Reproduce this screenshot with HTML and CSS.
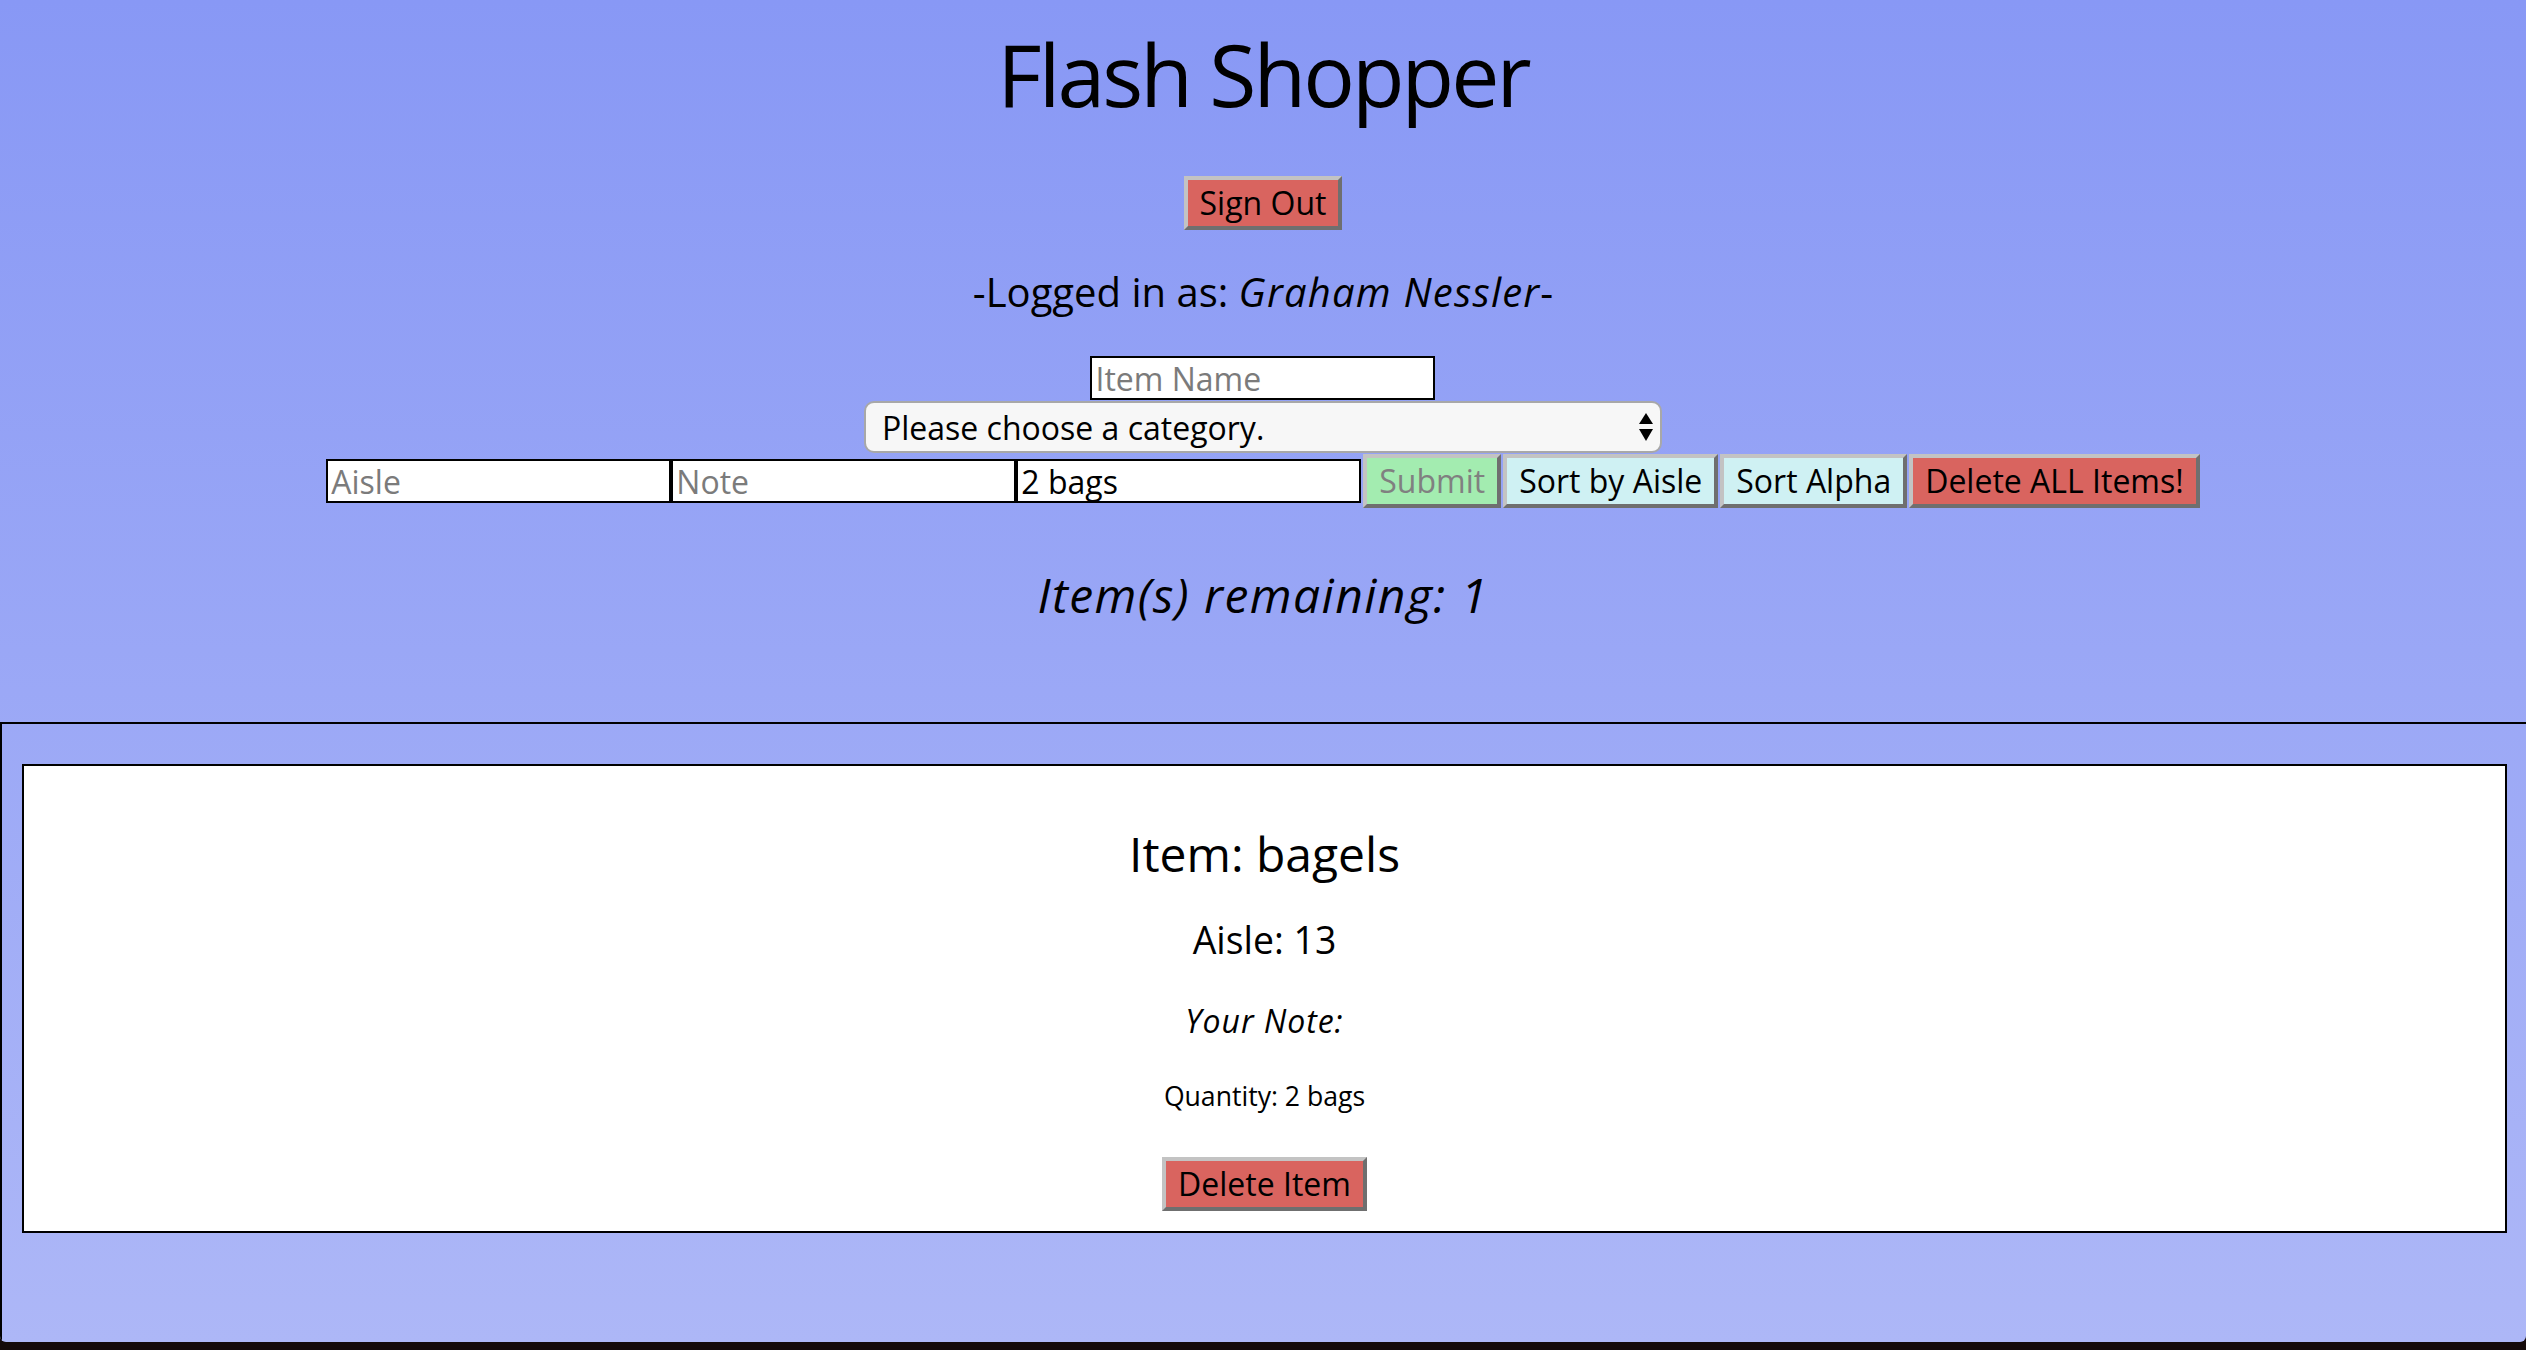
FILE: index.html
```html
<!DOCTYPE html>
<html lang="en">
<head>
<meta charset="utf-8">
<title>Flash Shopper</title>
<link rel="stylesheet" href="styles.css">
</head>
<body>
<div class="window">
  <main class="app">
    <h1 class="title">Flash Shopper</h1>
    <button class="btn btn-red signout" type="button">Sign Out</button>
    <p class="user">-Logged in as: <em class="user-name">Graham Nessler</em>-</p>
    <form class="entry">
      <input class="field" type="text" placeholder="Item Name">
      <div class="select-wrap">
        <select class="category">
          <option>Please choose a category.</option>
        </select>
        <svg class="arrows" width="14" height="28" viewBox="0 0 14 28" aria-hidden="true">
          <polygon points="7,0 14,11 0,11" fill="#000"/>
          <polygon points="0,16 14,16 7,28" fill="#000"/>
        </svg>
      </div>
      <div class="row">
        <input class="field" type="text" placeholder="Aisle">
        <input class="field" type="text" placeholder="Note">
        <input class="field" type="text" value="2 bags">
        <button class="btn btn-green" type="button" disabled>Submit</button>
        <button class="btn btn-cyan" type="button">Sort by Aisle</button>
        <button class="btn btn-cyan" type="button">Sort Alpha</button>
        <button class="btn btn-red" type="button">Delete ALL Items!</button>
      </div>
    </form>
    <h2 class="remaining">Item(s) remaining: 1</h2>
    <section class="list">
      <div class="card">
        <h2 class="item-name">Item: bagels</h2>
        <h3 class="item-aisle">Aisle: 13</h3>
        <h4 class="item-note">Your Note:</h4>
        <h5 class="item-qty">Quantity: 2 bags</h5>
        <button class="btn btn-red delete-item" type="button">Delete Item</button>
      </div>
    </section>
  </main>
</div>
</body>
</html>
```

FILE: styles.css
```css
html {
  background: #140a0a;
}

body {
  margin: 0;
  font-family: "Open Sans", "Noto Sans", sans-serif;
  color: #000;
}

.window {
  height: 1342px;
  overflow: hidden;
  background: linear-gradient(to bottom, #8898f5 0%, #adb7f7 100%);
  border-bottom-left-radius: 6px;
  border-bottom-right-radius: 6px;
}

.app {
  display: flex;
  flex-direction: column;
  align-items: center;
}

.title {
  margin: 15px 0 0;
  font-size: 86px;
  font-weight: normal;
  letter-spacing: -3px;
  line-height: normal;
}

.btn {
  font-family: "Open Sans", "Noto Sans", sans-serif;
  font-size: 32px;
  line-height: normal;
  height: 54px;
  box-sizing: border-box;
  padding: 0 12px 2px;
  border-width: 4px;
  border-style: solid;
  border-color: #c3c3c3 #6f6f6f #6f6f6f #c3c3c3;
  color: #000;
  border-radius: 0;
  cursor: pointer;
}

.btn-red {
  background: #d9645f;
}

.btn-cyan {
  background: #cff1f3;
}

.btn-green {
  background: #a3ecb0;
  color: #808080;
}

.signout {
  margin-top: 44px;
}

.user {
  margin: 34px 0 0;
  font-size: 40px;
  line-height: normal;
}

.user-name {
  letter-spacing: 0.03em;
}

.entry {
  margin-top: 37px;
  display: flex;
  flex-direction: column;
  align-items: center;
}

.field {
  width: 345px;
  height: 44px;
  box-sizing: border-box;
  margin: 0;
  padding: 0 3px;
  border: 2px solid #000;
  background: #fff;
  font-family: "Open Sans", "Noto Sans", sans-serif;
  font-size: 32px;
  color: #000;
  border-radius: 0;
  outline: none;
}

.field::placeholder {
  color: #7b7b7b;
}

.select-wrap {
  position: relative;
  margin-top: 1px;
}

.category {
  appearance: none;
  -webkit-appearance: none;
  width: 798px;
  height: 52px;
  box-sizing: border-box;
  margin: 0;
  padding: 0 40px 0 16px;
  border: 2px solid #a8a8a8;
  border-radius: 10px;
  background: #f7f7f7;
  font-family: "Open Sans", "Noto Sans", sans-serif;
  font-size: 32px;
  color: #000;
}

.arrows {
  position: absolute;
  right: 9px;
  top: 12px;
  pointer-events: none;
}

.row {
  margin-top: 1px;
  display: flex;
  align-items: center;
}

.row .btn {
  margin-left: 2px;
}

.remaining {
  margin: 54px 0 0;
  font-size: 48px;
  font-weight: normal;
  font-style: italic;
  letter-spacing: 0.03em;
  line-height: normal;
}

.list {
  align-self: flex-start;
  width: calc(100% + 3px);
  box-sizing: border-box;
  margin-top: 95px;
  padding: 20px 20px 200px;
  border: 2px solid #000;
}

.card {
  margin-top: 20px;
  background: #fff;
  border: 2px solid #000;
  display: flex;
  flex-direction: column;
  align-items: center;
}

.card h2,
.card h3,
.card h4,
.card h5 {
  font-weight: normal;
  line-height: normal;
  margin-bottom: 0;
}

.item-name {
  margin-top: 55px;
  font-size: 48px;
}

.item-aisle {
  margin-top: 28px;
  font-size: 37.4px;
}

.item-note {
  margin-top: 34px;
  font-size: 32px;
  font-style: italic;
  letter-spacing: 0.03em;
}

.item-qty {
  margin-top: 36px;
  font-size: 26.6px;
}

.delete-item {
  margin-top: 43px;
  margin-bottom: 20px;
}
```
